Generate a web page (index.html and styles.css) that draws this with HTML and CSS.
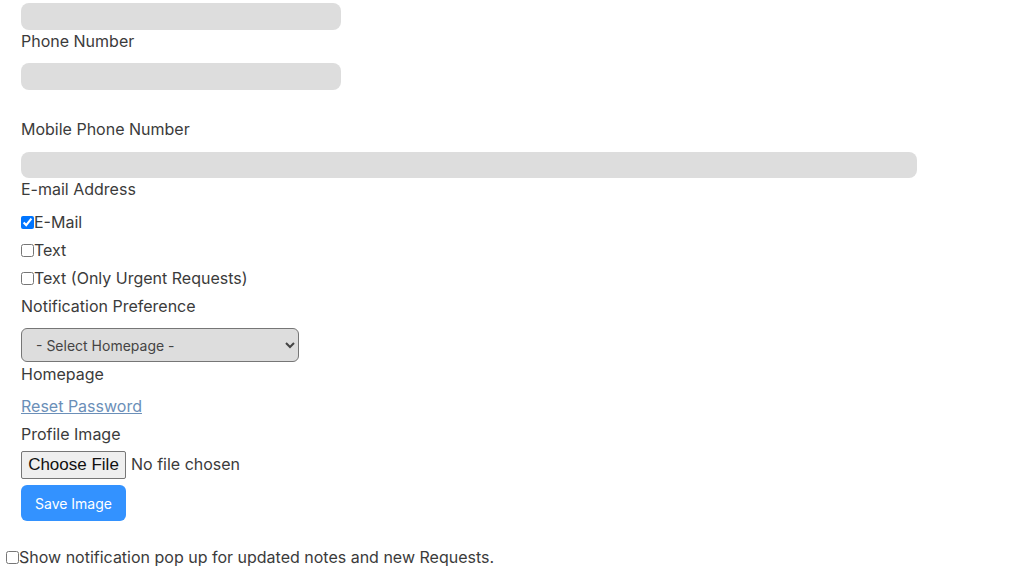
FILE: index.html
```html
<!DOCTYPE html>
<html>
<head>
<meta charset="utf-8">
<link rel="stylesheet" href="styles.css">
</head>
<body>
<div class="page">
  <form class="form">
    <input class="field field-short first" type="text">
    <label class="label">Phone Number</label>
    <input class="field field-short" type="text">
    <label class="label spaced">Mobile Phone Number</label>
    <input class="field field-wide" type="text">
    <label class="label">E-mail Address</label>
    <div class="checks">
      <label class="check"><input type="checkbox" checked>E-Mail</label>
      <label class="check"><input type="checkbox">Text</label>
      <label class="check"><input type="checkbox">Text (Only Urgent Requests)</label>
      <label class="check">Notification Preference</label>
    </div>
    <select class="select">
      <option>- Select Homepage -</option>
    </select>
    <label class="label after-select">Homepage</label>
    <a class="link" href="#">Reset Password</a>
    <label class="label profile">Profile Image</label>
    <input class="file" type="file">
    <button class="save" type="button">Save Image</button>
  </form>
  <label class="notify"><input type="checkbox">Show notification pop up for updated notes and new Requests.</label>
</div>
</body>
</html>
```

FILE: styles.css
```css
html, body {
  margin: 0;
  padding: 0;
  background: #ffffff;
}
body {
  font-family: Inter, "Noto Sans", sans-serif;
  font-size: 16px;
  line-height: 22px;
  color: #3b3b3b;
}
.page {
  display: flex;
  flex-direction: column;
}
.form {
  display: flex;
  flex-direction: column;
  align-items: flex-start;
  padding-left: 21px;
}
.field {
  height: 27px;
  box-sizing: border-box;
  border: none;
  border-radius: 8px;
  background: #dddddd;
  margin: 0;
  padding: 0 10px;
  font: inherit;
}
.field-short { width: 320px; }
.field-wide { width: 896px; height: 26px; }
.first { margin-top: 3px; }
.label {
  display: block;
  height: 22px;
  margin-bottom: 11px;
}
.label.spaced { margin-top: 28px; margin-bottom: 12px; }
.field-wide + .label { margin-bottom: 0; }
.checks {
  display: flex;
  flex-direction: column;
  gap: 6px;
  margin-top: 11px;
}
.check {
  display: flex;
  align-items: center;
  height: 22px;
}
.check input, .notify input {
  width: 13px;
  height: 13px;
  margin: 0;
}
.select {
  margin-top: 11px;
  width: 278px;
  height: 34px;
  box-sizing: border-box;
  border: 1px solid #767676;
  border-radius: 6px;
  background: #dddddd;
  font-family: Inter, "Noto Sans", sans-serif;
  font-size: 14px;
  color: #444444;
  padding: 0 10px;
}
.label.after-select {
  margin-top: 1px;
  margin-bottom: 0;
}
.link {
  margin-top: 10px;
  height: 22px;
  color: #6b8fb8;
  text-decoration: underline;
}
.label.profile {
  margin-top: 6px;
  margin-bottom: 0;
}
.file {
  margin-top: 6px;
  height: 28px;
  font-family: Inter, "Noto Sans", sans-serif;
  font-size: 16px;
  color: #3b3b3b;
}
.file::file-selector-button {
  font-family: "Liberation Sans", Arial, sans-serif;
  font-size: 17px;
  height: 28px;
  padding: 0 6px;
  margin-right: 5px;
  width: 105px;
  color: #111111;
  background: #efefef;
  border: 1px solid #767676;
  border-radius: 2px;
}
.save {
  margin-top: 6px;
  width: 105px;
  height: 36px;
  border: none;
  border-radius: 6px;
  background: #3392ff;
  color: #ffffff;
  font-family: Inter, "Noto Sans", sans-serif;
  font-size: 14px;
}
.notify {
  display: flex;
  align-items: center;
  height: 22px;
  margin-top: 25px;
  padding-left: 6px;
}
```
